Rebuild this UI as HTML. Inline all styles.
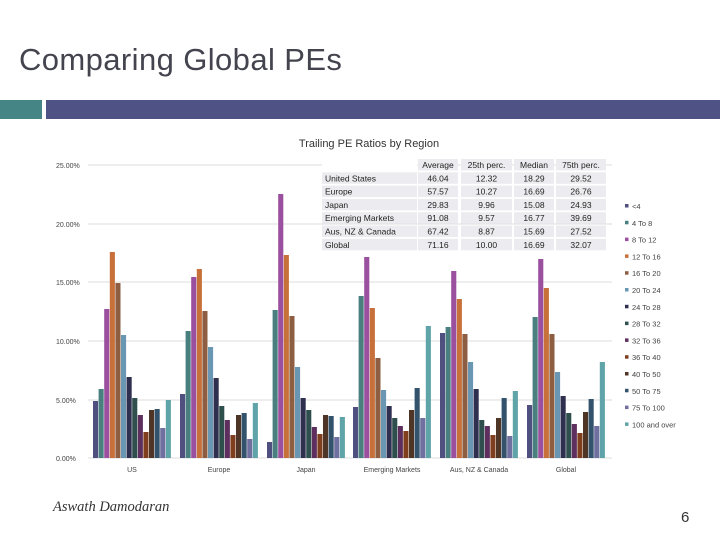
<!DOCTYPE html>
<html><head><meta charset="utf-8"><style>
html,body{margin:0;padding:0;width:720px;height:540px;background:#fff;overflow:hidden;font-family:"Liberation Sans",sans-serif;}
svg{position:absolute;left:0;top:0}
</style></head><body>
<svg id="s" width="720" height="540" xmlns="http://www.w3.org/2000/svg">
<text x="19" y="70" font-family="Liberation Sans, sans-serif" font-size="31" letter-spacing="0.4" fill="#44444f">Comparing Global PEs</text>
<rect x="0" y="100" width="42" height="19" fill="#468585"/>
<rect x="46" y="100" width="674" height="19" fill="#4f5285"/>
<text x="369" y="147" text-anchor="middle" font-size="11" fill="#333">Trailing PE Ratios by Region</text>
<g id="grid" stroke="#dcdcdc" stroke-width="1"></g>
<g id="axis" font-size="7" fill="#444"></g>
<g id="bars"></g>
<g id="tbl" font-size="8.5" fill="#222"></g>
<g id="leg" font-size="7.5" fill="#444"></g>
<text x="53" y="511" font-family="Liberation Serif, serif" font-style="italic" font-size="14.5" fill="#333">Aswath Damodaran</text>
<text x="681" y="522" font-size="15" fill="#333">6</text>
</svg>
<script>
var NS="http://www.w3.org/2000/svg";
function el(p,t,a,txt){var e=document.createElementNS(NS,t);for(var k in a)e.setAttribute(k,a[k]);if(txt!==undefined)e.textContent=txt;document.getElementById(p).appendChild(e);return e;}
var ys=[165,224,282,341,400,458],lab=["25.00%","20.00%","15.00%","10.00%","5.00%","0.00%"];
ys.forEach(function(y,i){el("grid","line",{x1:88,x2:612,y1:y,y2:y});el("axis","text",{x:56,y:y+3},lab[i]);});
var cols=["#4f4f80","#4a7f80","#9b4f9f","#c8703a","#8e5e42","#6896b3","#2f2f4f","#2f4f4f","#5e2f5e","#7f3f1f","#4f3525","#33526b","#7070a0","#5fa4a8"];
var tops=[
[401,389,309,252,283,335,377,398,415,432,410,409,428,400],
[394,331,277,269,311,347,378,406,420,435,415,413,439,403],
[442,310,194,255,316,367,398,410,427,434,415,416,437,417],
[407,296,257,308,358,390,406,418,426,431,410,388,418,326],
[333,327,271,299,334,362,389,420,426,435,418,398,436,391],
[405,317,259,288,334,372,396,413,424,433,412,399,426,362]];
var starts=[93,180,267,353,440,527];
var names=["US","Europe","Japan","Emerging Markets","Aus, NZ & Canada","Global"];
tops.forEach(function(g,gi){g.forEach(function(t,bi){el("bars","rect",{x:starts[gi]+bi*5.6,y:t,width:5.1,height:458-t,fill:cols[bi]});});
el("axis","text",{x:starts[gi]+39,y:472,"text-anchor":"middle"},names[gi]);});
var rows=[["","Average","25th perc.","Median","75th perc."],["United States","46.04","12.32","18.29","29.52"],["Europe","57.57","10.27","16.69","26.76"],["Japan","29.83","9.96","15.08","24.93"],["Emerging Markets","91.08","9.57","16.77","39.69"],["Aus, NZ & Canada","67.42","8.87","15.69","27.52"],["Global","71.16","10.00","16.69","32.07"]];
var cx=[[322,95],[418,40],[461,51],[514,40],[556,50]];
rows.forEach(function(r,ri){var y=159+ri*13.3;
r.forEach(function(c,ci){el("tbl","rect",{x:cx[ci][0],y:y,width:cx[ci][1],height:11.5,fill:ri==0&&ci==0?"#fff":"#ececf0"});
if(ci==0)el("tbl","text",{x:cx[0][0]+3,y:y+9},c);else el("tbl","text",{x:cx[ci][0]+cx[ci][1]/2,y:y+9,"text-anchor":"middle"},c);});});
var ln=["<4","4 To 8","8 To 12","12 To 16","16 To 20","20 To 24","24 To 28","28 To 32","32 To 36","36 To 40","40 To 50","50 To 75","75 To 100","100 and over"];
ln.forEach(function(t,i){var y=207+i*16.8;el("leg","rect",{x:625,y:y-3,width:3.5,height:3.5,fill:cols[i]});el("leg","text",{x:632,y:y+2},t);});
</script>
</body></html>
